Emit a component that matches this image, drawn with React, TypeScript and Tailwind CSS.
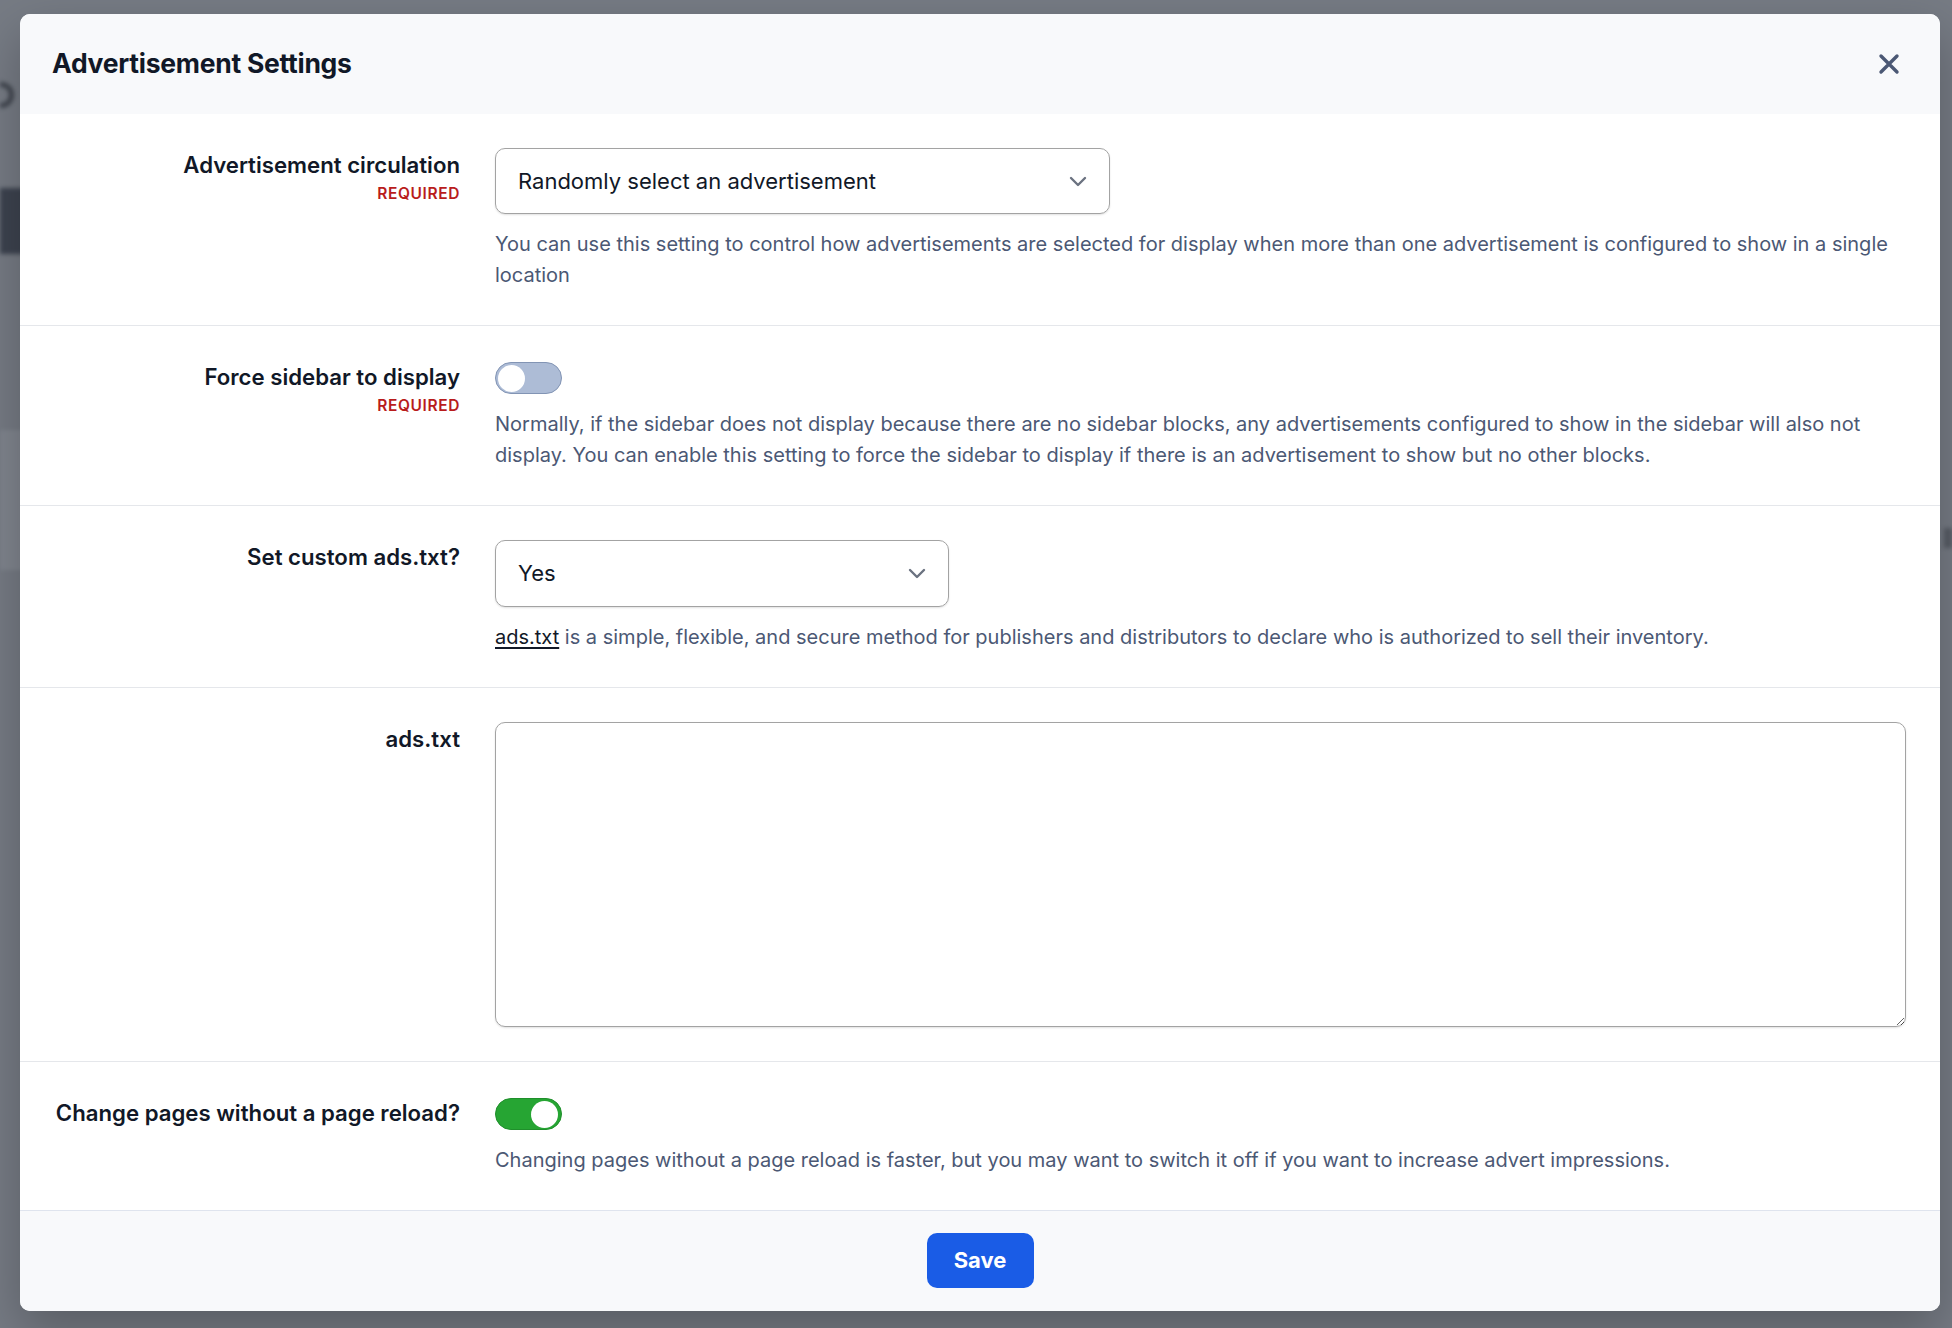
import { ReactNode } from "react";

const font = { fontFamily: "Inter, 'Noto Sans', sans-serif" };

function Chevron() {
  return (
    <svg width="18" height="11" viewBox="0 0 18 11" fill="none" className="shrink-0">
      <path d="M2 2l7 7 7-7" stroke="#6b7280" strokeWidth="2.4" strokeLinecap="round" strokeLinejoin="round" />
    </svg>
  );
}

function Toggle({ on }: { on: boolean }) {
  return on ? (
    <div className="mt-[2.5px] w-[67px] h-[32px] rounded-full bg-[#26a533] border border-[#1f8f2b] flex items-center justify-end pr-[3px]">
      <span className="w-[27px] h-[27px] rounded-full bg-white" />
    </div>
  ) : (
    <div className="mt-[2px] w-[67px] h-[32px] rounded-full bg-[#adbcd6] border border-[#8294b4] flex items-center pl-[2px]">
      <span className="w-[27px] h-[27px] rounded-full bg-white" />
    </div>
  );
}

function Row({ label, required, children, last }: { label: string; required?: boolean; children: ReactNode; last?: boolean }) {
  return (
    <div className={`flex pl-[36px] pr-[34px] py-[34px] ${last ? "" : "border-b border-[#e5e7eb]"}`}>
      <div className="w-[404px] shrink-0 flex flex-col items-end pt-[1px]">
        <div className="whitespace-nowrap text-[22.2px] leading-[31px] font-semibold text-[#111827]">{label}</div>
        {required && (
          <div className="mt-[3px] text-[15.5px] leading-[22px] font-semibold tracking-[0.04em] text-[#b91c1c]">REQUIRED</div>
        )}
      </div>
      <div className="flex-1 ml-[35px] min-w-0">{children}</div>
    </div>
  );
}

function Desc({ children, className = "" }: { children: ReactNode; className?: string }) {
  return <p className={`text-[20px] leading-[31px] text-[#4b5874] ${className}`}>{children}</p>;
}

export default function App() {
  return (
    <div className="relative w-[1952px] h-[1328px] overflow-hidden bg-[#767b84]" style={font}>
      {/* blurred page behind the dialog */}
      <div className="absolute inset-0 blur-[2px] opacity-70">
        <div className="absolute left-0 top-[82px] w-[14px] h-[26px] rounded-r-full border-[5px] border-l-0 border-[#2a2f38]" />
        <div className="absolute left-0 top-[188px] w-[40px] h-[66px] bg-[#252c3a]" />
        <div className="absolute left-0 top-[430px] w-[60px] h-[140px] bg-[#858a93]" />
        <div className="absolute right-0 top-[528px] w-[8px] h-[20px] bg-[#4a4f58]" />
      </div>

      <div className="absolute left-[20px] top-[14px] w-[1920px] bg-white rounded-[10px] overflow-hidden shadow-[0_20px_50px_rgba(0,0,0,0.25)] flex flex-col">
        {/* Header */}
        <div className="h-[100px] shrink-0 bg-[#f8f9fb] flex items-center justify-between pl-[32px] pr-[40px]">
          <h2 className="text-[26.5px] font-bold text-[#111827] tracking-[-0.01em]">Advertisement Settings</h2>
          <svg width="22" height="22" viewBox="0 0 22 22" fill="none">
            <path d="M3 3l16 16M19 3L3 19" stroke="#4b5874" strokeWidth="3.4" strokeLinecap="round" />
          </svg>
        </div>

        <Row label="Advertisement circulation" required>
          <div className="w-[615px] h-[66px] rounded-[10px] border border-[#a3a3a3] shadow-[0_1px_2px_rgba(0,0,0,0.12)] flex items-center justify-between pl-[22px] pr-[22px]">
            <span className="text-[22px] text-[#111827]">Randomly select an advertisement</span>
            <Chevron />
          </div>
          <Desc className="mt-[15px]">
            You can use this setting to control how advertisements are selected for display when more than one advertisement is configured to show in a single location
          </Desc>
        </Row>

        <Row label="Force sidebar to display" required>
          <Toggle on={false} />
          <Desc className="mt-[15px]">
            Normally, if the sidebar does not display because there are no sidebar blocks, any advertisements configured to show in the sidebar will also not display. You can enable this setting to force the sidebar to display if there is an advertisement to show but no other blocks.
          </Desc>
        </Row>

        <Row label="Set custom ads.txt?">
          <div className="w-[454px] h-[67px] rounded-[10px] border border-[#a3a3a3] shadow-[0_1px_2px_rgba(0,0,0,0.12)] flex items-center justify-between pl-[22px] pr-[22px]">
            <span className="text-[22px] text-[#111827]">Yes</span>
            <Chevron />
          </div>
          <Desc className="mt-[14.5px]">
            <span className="text-[#111827] underline decoration-[1.5px] underline-offset-[3px]">ads.txt</span> is a simple, flexible, and secure method for publishers and distributors to declare who is authorized to sell their inventory.
          </Desc>
        </Row>

        <Row label="ads.txt">
          <textarea className="block w-full h-[305px] rounded-[10px] border border-[#a3a3a3] shadow-[0_1px_2px_rgba(0,0,0,0.12)] p-4 text-[20px] outline-none" />
        </Row>

        <Row label="Change pages without a page reload?" last>
          <Toggle on />
          <Desc className="mt-[14.5px]">
            Changing pages without a page reload is faster, but you may want to switch it off if you want to increase advert impressions.
          </Desc>
        </Row>

        {/* Footer */}
        <div className="h-[101px] shrink-0 bg-[#f8f9fb] border-t border-[#dfe4ee] flex items-center justify-center">
          <button className="w-[107px] h-[55px] rounded-[10px] bg-[#1a5ce6] text-white text-[22px] font-bold">Save</button>
        </div>
      </div>
    </div>
  );
}
